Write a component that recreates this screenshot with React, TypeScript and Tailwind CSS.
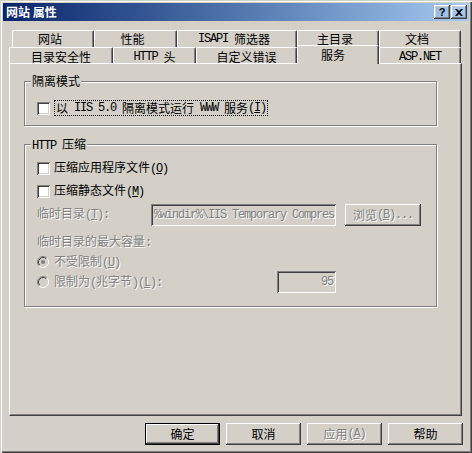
import React from 'react';

const raised = "shadow-[inset_-1px_-1px_0_#404040,inset_1px_1px_0_#ffffff,inset_-2px_-2px_0_#808080,inset_2px_2px_0_#d4d0c8]";
const sunken = "shadow-[inset_1px_1px_0_#808080,inset_-1px_-1px_0_#ffffff,inset_2px_2px_0_#404040,inset_-2px_-2px_0_#d4d0c8]";
const etched = "border border-[#808080] shadow-[1px_1px_0_#ffffff,inset_1px_1px_0_#ffffff]";
const dim = "text-[#808080] [text-shadow:1px_1px_0_#ffffff]";

// latin runs in a 6px-wide mono, "&X" marks the access key
function T({ s }: { s: string }) {
  const parts = s.split(/([\x20-\x7e]+)/).filter(Boolean);
  return (
    <>
      {parts.map((p, i) => {
        if (!/^[\x20-\x7e]+$/.test(p)) return <span key={i}>{p}</span>;
        const bits = p.split(/(&.)/).filter(Boolean);
        return (
          <span key={i} className="font-['Liberation_Mono'] tracking-[-1.2px] whitespace-pre">
            {bits.map((b, j) => (b[0] === '&' && b.length === 2 ? <u key={j}>{b[1]}</u> : b))}
          </span>
        );
      })}
    </>
  );
}

function Check({ label, focus }: { label: string; focus?: boolean }) {
  return (
    <div className="flex items-center h-[16px] gap-[4px]">
      <div className={`w-[13px] h-[13px] bg-white ${sunken}`} />
      <span className={focus ? "border border-dotted border-black px-[1px] h-[16px] flex items-center" : ""}>
        <T s={label} />
      </span>
    </div>
  );
}

function Radio({ label, on }: { label: string; on?: boolean }) {
  return (
    <div className="flex items-center gap-[5px]">
      <svg width="12" height="12" viewBox="0 0 12 12">
        <circle cx="6" cy="6" r="5" fill="#d4d0c8" />
        <path d="M2.11 9.89 A5.5 5.5 0 0 1 9.89 2.11" stroke="#808080" fill="none" />
        <path d="M9.89 2.11 A5.5 5.5 0 0 1 2.11 9.89" stroke="#ffffff" fill="none" />
        <path d="M2.82 9.18 A4.5 4.5 0 0 1 9.18 2.82" stroke="#404040" fill="none" />
        <path d="M9.18 2.82 A4.5 4.5 0 0 1 2.82 9.18" stroke="#d4d0c8" fill="none" />
        {on && <circle cx="6" cy="6" r="2" fill="#808080" />}
      </svg>
      <span className={dim}><T s={label} /></span>
    </div>
  );
}

const row1 = [
  { label: '网站', w: 'w-[82px]' },
  { label: '性能', w: 'w-[83px]' },
  { label: 'ISAPI 筛选器', w: 'w-[120px]' },
  { label: '主目录', w: 'w-[82px]' },
  { label: '文档', w: 'w-[82px]' },
];

const row2 = [
  { label: '目录安全性', w: 'w-[104px]' },
  { label: 'HTTP 头', w: 'w-[83px]' },
  { label: '自定义错误', w: 'w-[101px]' },
  { label: '服务', w: 'w-[82px]', active: true },
  { label: 'ASP.NET', w: 'w-[82px]' },
];

const tabBase = "border-t border-l border-white border-r border-r-[#404040] shadow-[inset_-1px_0_0_#808080] rounded-t-[2px] flex justify-center bg-[#d4d0c8]";

function Btn({ label, w, def, off }: { label: string; w: string; def?: boolean; off?: boolean }) {
  return (
    <div className={`${w} h-[22px] ${def ? 'border border-black' : ''}`}>
      <div className={`w-full h-full ${raised} flex items-center justify-center ${off ? dim : ''}`}>
        <T s={label} />
      </div>
    </div>
  );
}

export default function App() {
  return (
    <div className="w-[472px] h-[453px] bg-[#d4d0c8] p-[3px] shadow-[inset_1px_1px_0_#d4d0c8,inset_2px_2px_0_#ffffff,inset_-1px_-1px_0_#404040,inset_-2px_-2px_0_#808080] font-['Noto_Sans_CJK_SC',sans-serif] text-[12px] leading-[14px] text-black overflow-hidden">
      {/* title bar */}
      <div className="h-[18px] bg-gradient-to-r from-[#0a246a] to-[#a6caf0] flex items-center pl-[3px] pr-[2px]">
        <span className="text-white font-bold flex-1">网站 属性</span>
        <div className="flex gap-[1px]">
          <div className={`w-[16px] h-[14px] ${raised} flex items-center justify-center text-[11px] font-bold leading-none font-['Liberation_Sans']`}>?</div>
          <div className={`w-[16px] h-[14px] ${raised} flex items-center justify-center`}>
            <svg width="8" height="7" viewBox="0 0 8 7">
              <path d="M0 0h2l2 2 2-2h2L5 3.5 8 7H6L4 5 2 7H0l3-3.5z" fill="#000" />
            </svg>
          </div>
        </div>
      </div>

      {/* tabs */}
      <div className="mt-[9px] ml-[9px] h-[17px] flex">
        {row1.map((t) => (
          <div key={t.label} className={`${t.w} h-[17px] ${tabBase} pt-[1px] pr-[6px]`}>
            <T s={t.label} />
          </div>
        ))}
      </div>
      <div className="ml-[6px] h-[16px] flex items-end">
        {row2.map((t) =>
          t.active ? (
            <div key={t.label} className={`${t.w} h-[19px] -mb-[1px] relative z-10 ${tabBase} pt-[2px] pr-[10px]`}>
              <T s={t.label} />
            </div>
          ) : (
            <div key={t.label} className={`${t.w} h-[16px] ${tabBase} pt-[2px]`}>
              <T s={t.label} />
            </div>
          )
        )}
      </div>

      {/* panel */}
      <div className="ml-[6px] w-[453px] h-[353px] border-t border-l border-white border-r border-b border-r-[#404040] border-b-[#404040] shadow-[inset_-1px_-1px_0_#808080] pl-[14px] pt-[17px]">
        <div className={`relative w-[413px] h-[45px] ${etched} pl-[12px] pt-[18px]`}>
          <span className="absolute -top-[8px] left-[6px] px-[1px] bg-[#d4d0c8]">隔离模式</span>
          <Check label="以 IIS 5.0 隔离模式运行 WWW 服务(&I)" focus />
        </div>

        <div className={`relative mt-[18px] w-[413px] h-[163px] ${etched} pl-[12px] pt-[15px]`}>
          <span className="absolute -top-[8px] left-[6px] px-[1px] bg-[#d4d0c8]"><T s="HTTP 压缩" /></span>
          <Check label="压缩应用程序文件(&O)" />
          <div className="mt-[7px]">
            <Check label="压缩静态文件(&M)" />
          </div>

          <div className="mt-[5px] flex items-center h-[22px]">
            <span className={`w-[114px] -mt-[3px] ${dim}`}><T s="临时目录(&T):" /></span>
            <div className={`w-[185px] h-[22px] ${sunken} flex items-center pl-[3px] overflow-hidden whitespace-nowrap ${dim}`}>
              <T s={"%windir%\\IIS Temporary Compres"} />
            </div>
            <div className="ml-[9px]">
              <Btn label="浏览(&B)..." w="w-[76px]" off />
            </div>
          </div>

          <div className={`mt-[8px] h-[14px] ${dim}`}><T s="临时目录的最大容量:" /></div>

          <div className="mt-[7px] h-[14px] flex items-center">
            <Radio label="不受限制(&U)" on />
          </div>

          <div className="mt-[2px] h-[22px] flex items-center">
            <div className="w-[240px]">
              <Radio label="限制为(兆字节)(&L):" />
            </div>
            <div className={`w-[59px] h-[22px] ${sunken} flex items-center justify-end pr-[3px] ${dim}`}>
              <T s="95" />
            </div>
          </div>
        </div>
      </div>

      {/* buttons */}
      <div className="mt-[7px] ml-[142px] flex gap-[6px]">
        <Btn label="确定" w="w-[75px]" def />
        <Btn label="取消" w="w-[75px]" />
        <Btn label="应用(&A)" w="w-[75px]" off />
        <Btn label="帮助" w="w-[75px]" />
      </div>
    </div>
  );
}
